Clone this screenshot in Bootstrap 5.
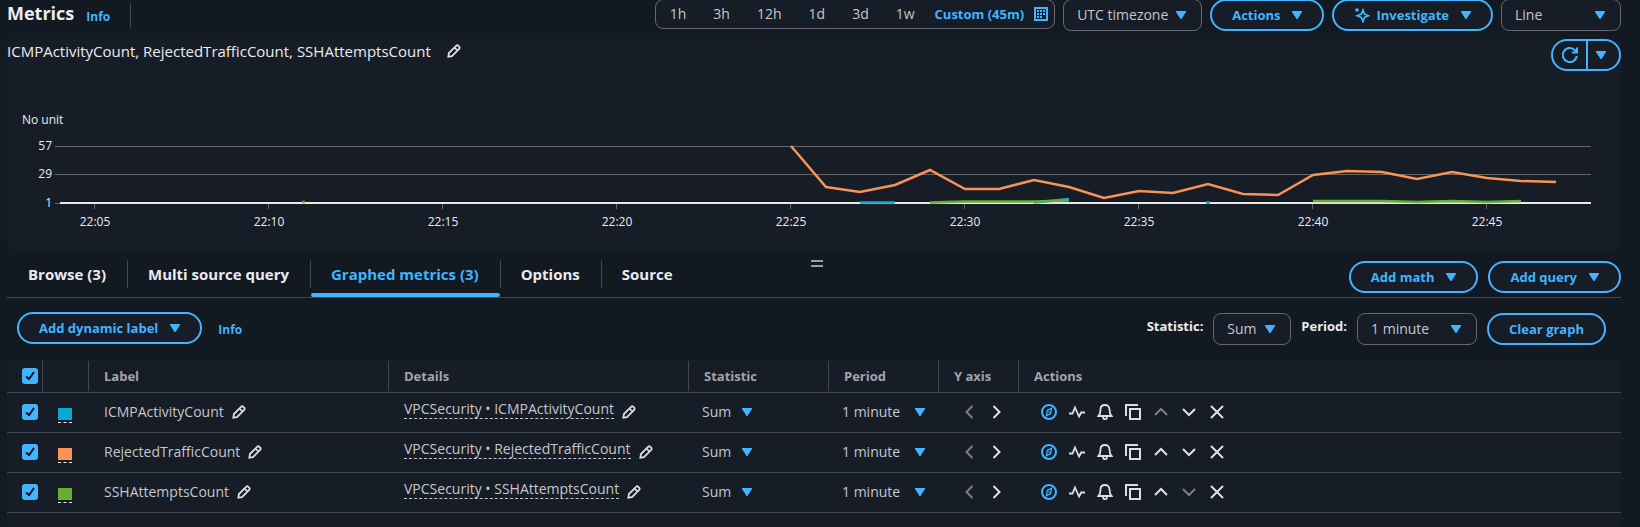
<!DOCTYPE html>
<html lang="en">
<head>
<meta charset="utf-8">
<meta name="viewport" content="width=device-width, initial-scale=1">
<title>Metrics</title>
<link href="https://cdn.jsdelivr.net/npm/bootstrap@5.3.0/dist/css/bootstrap.min.css" rel="stylesheet">
<style>
:root { --page: #131920; --panel: #161d26; --accent: #42b4ff; --line: #424650; --field: #656871; --text: #c6c6cd; --bright: #ebebf0; --muted: #a4a4ad; }
body { background: var(--page); color: var(--text); font: 14px/20px "Open Sans", sans-serif; padding: 0 19px 0 7px; overflow-x: hidden; }
svg { display: block; fill: none; stroke: currentColor; stroke-width: 2; }
.ico { width: 16px; height: 16px; flex: none; }
.ico-sm { width: 14px; height: 14px; flex: none; }
.caret { width: 10px; height: 8px; flex: none; fill: currentColor; stroke: none; }
a { color: var(--accent); text-decoration: none; }
.info { font-size: 12px; font-weight: 700; }
.bright { color: var(--bright); }
.gap-10 { gap: 10px; }
.gap-12 { gap: 12px; }

.topbar { height: 45px; margin-top: -1px; }
.topbar h1 { font-size: 18px; line-height: 28px; font-weight: 700; }
.rule { width: 1px; height: 25px; margin-left: 12px; background: var(--line); }
.pill { height: 32px; border: 2px solid var(--accent); border-radius: 16px; background: var(--panel); color: var(--accent); font-size: 13px; font-weight: 700; line-height: 20px; padding: 0 20px; display: inline-flex; align-items: center; gap: 12px; white-space: nowrap; }
.pill:hover { background: #1d2836; color: var(--accent); border-color: var(--accent); }
.pill-icon { gap: 6px; }
.ranges { height: 30px; border: 1px solid var(--field); border-radius: 8px; background: var(--panel); }
.ranges button { border: 0; background: none; color: var(--text); padding: 0 13px 0 14px; white-space: nowrap; }
.ranges .current { color: var(--accent); font-size: 13px; font-weight: 700; padding: 0 6px 0 7px; display: flex; align-items: center; gap: 10px; }
.field { height: 32px; border: 1px solid var(--field); border-radius: 8px; color: var(--text); font-size: 14px; line-height: 20px; padding: 0 26px 0 13px; background: var(--panel) url("data:image/svg+xml,%3Csvg xmlns='http://www.w3.org/2000/svg' viewBox='0 0 10 8'%3E%3Cpath d='M0 0h10v1L5.500 8h-1L0 1z' fill='%2342b4ff'/%3E%3C/svg%3E") no-repeat right 15px center / 10px 8px; }
.w-zone { width: 139px; }
.w-kind { width: 120px; }
.w-stat { width: 78px; }
.w-time { width: 120px; }
.plain { border: 0; border-radius: 0; height: 24px; padding-left: 0; margin-left: -2px; background-position: right 0 center; }
.plain.w-stat { width: 50px; padding-right: 12px; }
.plain.w-time { width: 83px; padding-right: 12px; }

.graph { background: var(--panel); border-radius: 0 0 16px 16px; }
.graph-head { height: 32px; margin-top: -5px; }
.graph-head h2 { font-size: 15px; line-height: 24px; font-weight: 400; }
.split { height: 32px; border: 2px solid var(--accent); border-radius: 16px; overflow: hidden; background: var(--panel); }
.split button { width: 33px; border: 0; padding: 0; background: none; color: var(--accent); display: flex; align-items: center; justify-content: center; }
.split button + button { border-left: 2px solid var(--accent); padding-right: 5px; }
.plot { width: 100%; height: auto; }
.plot text { fill: var(--bright); stroke: none; font-size: 12px; font-weight: 500; }

.tabs { height: 45px; border-bottom: 1px solid var(--line); position: relative; }
.tabs .nav-link { position: relative; height: 44px; padding: 0 21px; color: var(--bright); font-size: 15px; font-weight: 700; line-height: 42px; white-space: nowrap; }
.tabs .nav-link.active { color: var(--accent); }
.tabs li + li .nav-link::before { content: ""; position: absolute; left: 0; top: 7px; height: 28px; width: 1px; background: var(--line); }
.tabs .active::after { content: ""; position: absolute; left: 1px; right: 0; bottom: 0; height: 4px; border-radius: 2px; background: var(--accent); }
.grip { position: absolute; left: 50%; top: 7px; width: 12px; height: 7px; margin-left: -3px; border: solid #95a5a6; border-width: 2px 0; padding: 0; background: none; }

.tools { padding: 14px 15px 15px 10px; height: 62px; }
.tools label { color: var(--bright); font-size: 13px; font-weight: 700; line-height: 26px; }
.tools-right { margin-top: 1px; }

.metrics { background: var(--panel); table-layout: fixed; margin: 0; width: 100%; min-width: 1240px; }
.metrics th, .metrics td { padding: 0 16px; vertical-align: middle; border-bottom: 1px solid var(--line); white-space: nowrap; }
.metrics th { height: 32px; color: var(--muted); font-size: 13px; font-weight: 700; position: relative; }
.metrics th + th::before { content: ""; position: absolute; left: 0; top: 1px; bottom: 1px; width: 1px; background: var(--line); }
.metrics td { height: 40px; }
.metrics .pick { padding: 0 0 0 15px; }
.metrics .form-check-input { display: block; width: 16px; height: 16px; margin: 0; border: 0; border-radius: 3px; background-color: var(--accent); background-size: 16px 16px; background-image: url("data:image/svg+xml,%3Csvg xmlns='http://www.w3.org/2000/svg' viewBox='0 0 16 16'%3E%3Cpath d='M4 8.500l3 2.500 5-7' fill='none' stroke='%230f141a' stroke-width='2'/%3E%3C/svg%3E"); }
.swatch { display: block; width: 14px; height: 15px; margin-top: 6px; padding: 0 0 2px; border: 0; border-bottom: 1px dashed var(--bright); background-clip: content-box; }
.s-blue { background-color: #08aad2; } .s-orange { background-color: #f89256; } .s-green { background-color: #69ae34; }
.metric-link { color: var(--text); border-bottom: 1px dashed var(--text); line-height: 18px; margin-bottom: 5px; }
.act { border: 0; padding: 0; background: none; color: #dedee3; display: block; }
.act:disabled { color: #7d7f88; }
.act.on { color: var(--accent); }
.actions, .sides { padding-left: 7px; }
.tail { background: var(--panel); height: 16px; }
</style>
</head>
<body>
<svg class="d-none" aria-hidden="true">
  <symbol id="pen" viewBox="0 0 16 16"><path d="M1.500 14.500l.7-4.200 8.200-8.200c.8-.8 1.800-.8 2.600 0l.9.9c.8.8.8 1.800 0 2.600l-8.200 8.200zM8.500 4l3.500 3.500"/></symbol>
  <symbol id="caret" viewBox="0 0 10 8"><path d="M0 0h10v1L5.500 8h-1L0 1z"/></symbol>
  <symbol id="calendar" viewBox="0 0 14 14"><path d="M1 1h12v12H1z"/><path d="M3 4h2M6 4h2M9 4h2M3 7h2M6 7h2M9 7h2M3 10h2M6 10h2"/></symbol>
  <symbol id="spark" viewBox="0 0 16 16"><path stroke-width="1.700" d="M9 3l1.500 4L14.500 8.800l-4 1.700L9 14.500l-1.700-4L3.200 8.800l4.100-1.700z"/><path stroke-width="1.500" d="M3 1v4M1 3h4"/></symbol>
  <symbol id="refresh" viewBox="0 0 16 16"><path d="M14.800 9A7 7 0 1 1 13 3.300l1.500 1.500M15 .5V5.500h-5"/></symbol>
  <symbol id="compass" viewBox="0 0 16 16"><circle cx="8" cy="8" r="7"/><path stroke-width="1.300" d="M10.500 4.200l-.8 5.300-4.200 2.300.8-5.300zM8 7.200v1.600"/></symbol>
  <symbol id="pulse" viewBox="0 0 16 16"><path stroke-width="1.800" d="M0 9.500h3.500L6 3.500l4 9 2.200-4H16"/></symbol>
  <symbol id="bell" viewBox="0 0 16 16"><path stroke-width="1.800" d="M1.500 12h13c-1.500-1.500-2-3-2-6.500C12.500 2.500 10.500 1 8 1S3.500 2.500 3.500 5.500c0 3.500-.5 5-2 6.500zM6 13c0 3 4 3 4 0"/></symbol>
  <symbol id="copy" viewBox="0 0 16 16"><path d="M5 5h10v10H5zM1 12V1h12"/></symbol>
  <symbol id="left" viewBox="0 0 16 16"><path d="M11.500 2L5.500 8l6 6"/></symbol>
  <symbol id="right" viewBox="0 0 16 16"><path d="M4.500 2l6 6-6 6"/></symbol>
  <symbol id="up" viewBox="0 0 16 16"><path d="M2 11l6-6 6 6"/></symbol>
  <symbol id="down" viewBox="0 0 16 16"><path d="M2 5l6 6 6-6"/></symbol>
  <symbol id="close" viewBox="0 0 16 16"><path d="M2 2l12 12M14 2L2 14"/></symbol>
</svg>

<header class="topbar d-flex align-items-start gap-2">
  <h1 class="bright m-0">Metrics</h1>
  <a class="info ms-1 mt-2" href="#">Info</a>
  <span class="rule mt-1"></span>
  <div class="ranges d-flex ms-auto" role="group" aria-label="Time range">
    <button type="button">1h</button><button type="button">3h</button><button type="button">12h</button><button type="button">1d</button><button type="button">3d</button><button type="button">1w</button>
    <button type="button" class="current">Custom (45m)<svg class="ico-sm"><use href="#calendar"/></svg></button>
  </div>
  <select class="form-select field w-zone" aria-label="Time zone"><option>UTC timezone</option></select>
  <button type="button" class="btn pill">Actions<svg class="caret"><use href="#caret"/></svg></button>
  <button type="button" class="btn pill"><span class="pill-icon d-flex align-items-center"><svg class="ico"><use href="#spark"/></svg>Investigate</span><svg class="caret"><use href="#caret"/></svg></button>
  <select class="form-select field w-kind" aria-label="Graph type"><option>Line</option></select>
</header>

<main>
  <section class="graph">
    <div class="graph-head d-flex align-items-start">
      <div class="d-flex align-items-center gap-3">
        <h2 class="bright m-0">ICMPActivityCount, RejectedTrafficCount, SSHAttemptsCount</h2>
        <button type="button" class="act" aria-label="Edit title"><svg class="ico-sm"><use href="#pen"/></svg></button>
      </div>
      <div class="split d-flex ms-auto">
        <button type="button" aria-label="Refresh"><svg class="ico"><use href="#refresh"/></svg></button>
        <button type="button" aria-label="Refresh options"><svg class="caret"><use href="#caret"/></svg></button>
      </div>
    </div>
    <svg class="plot" viewBox="7 71 1614 182" role="img" aria-label="Metric counts by minute">
      <text x="22" y="124">No unit</text>
      <path stroke="#656666" stroke-width="1" d="M55 146.500H1591M55 174.500H1591M55 203.500H60M94.500 204v5M268.500 204v5M442.500 204v5M616.500 204v5M790.500 204v5M964.500 204v5M1138.500 204v5M1312.500 204v5M1486.500 204v5"/>
      <g text-anchor="end"><text x="52" y="150">57</text><text x="52" y="178">29</text><text x="52" y="207">1</text></g>
      <path stroke="#e8e8e4" d="M60 203H1591"/>
      <g stroke="#08aad2" stroke-width="2.500"><path d="M860 202.500H895M1034 202.500L1069 199M1206 202.500h4"/></g>
      <g stroke="#69ae34" stroke-width="2.500"><path d="M302 202h3M930 202.500L965 201.500H1034L1069 200.500M1313 201H1382L1417 202 1452 201 1487 202 1521 201"/></g>
      <path stroke="#f89256" stroke-width="2.500" d="M791 146L826 187 860 192 895 185 930 170 965 189 999 189 1034 180 1069 187 1104 198 1139 191 1173 193 1208 184 1243 194 1278 195 1313 175 1347 171 1382 172 1417 179 1452 172 1487 178 1521 181 1556 182"/>
      <g text-anchor="middle"><text x="95" y="226">22:05</text><text x="269" y="226">22:10</text><text x="443" y="226">22:15</text><text x="617" y="226">22:20</text><text x="791" y="226">22:25</text><text x="965" y="226">22:30</text><text x="1139" y="226">22:35</text><text x="1313" y="226">22:40</text><text x="1487" y="226">22:45</text></g>
    </svg>
  </section>

  <nav class="tabs d-flex justify-content-between">
    <ul class="nav flex-nowrap">
      <li><a class="nav-link" href="#">Browse (3)</a></li>
      <li><a class="nav-link" href="#">Multi source query</a></li>
      <li><a class="nav-link active" href="#">Graphed metrics (3)</a></li>
      <li><a class="nav-link" href="#">Options</a></li>
      <li><a class="nav-link" href="#">Source</a></li>
    </ul>
    <button type="button" class="grip" aria-label="Resize panels"></button>
    <div class="d-flex gap-10 mt-2">
      <button type="button" class="btn pill">Add math<svg class="caret"><use href="#caret"/></svg></button>
      <button type="button" class="btn pill">Add query<svg class="caret"><use href="#caret"/></svg></button>
    </div>
  </nav>

  <div class="tools d-flex align-items-start">
    <button type="button" class="btn pill">Add dynamic label<svg class="caret"><use href="#caret"/></svg></button>
    <a class="info ms-3 mt-2" href="#">Info</a>
    <div class="tools-right d-flex align-items-start gap-10 ms-auto">
      <label for="stat">Statistic:</label>
      <select id="stat" class="form-select field w-stat"><option>Sum</option></select>
      <label for="period">Period:</label>
      <select id="period" class="form-select field w-time"><option>1 minute</option></select>
      <button type="button" class="btn pill">Clear graph</button>
    </div>
  </div>

  <table class="metrics">
    <colgroup><col style="width:35px"><col style="width:46px"><col style="width:300px"><col style="width:300px"><col style="width:140px"><col style="width:110px"><col style="width:80px"><col></colgroup>
    <thead><tr>
      <th class="pick"><input class="form-check-input" type="checkbox" checked aria-label="Select all"></th><th></th><th>Label</th><th>Details</th><th>Statistic</th><th>Period</th><th>Y axis</th><th>Actions</th>
    </tr></thead>
    <tbody id="rows"></tbody>
  </table>
  <div class="tail"></div>
</main>

<script src="https://cdn.jsdelivr.net/npm/bootstrap@5.3.0/dist/js/bootstrap.bundle.min.js"></script>
<script>
const metrics = [["ICMPActivityCount", "blue"], ["RejectedTrafficCount", "orange"], ["SSHAttemptsCount", "green"]];
const act = (icon, label, state = "") => `<button type="button" class="act ${state === "on" ? "on" : ""}" aria-label="${label}" ${state === "disabled" ? "disabled" : ""}><svg class="${icon === "pen" ? "ico-sm" : "ico"}"><use href="#${icon}"/></svg></button>`;
document.getElementById("rows").innerHTML = metrics.map(([name, color], i) => `<tr>
  <td class="pick"><input class="form-check-input" type="checkbox" checked aria-label="Select ${name}"></td>
  <td><button type="button" class="swatch s-${color}" aria-label="Color"></button></td>
  <td><div class="d-flex align-items-center gap-2">${name}${act("pen", "Edit label")}</div></td>
  <td><div class="d-flex align-items-center gap-2"><a class="metric-link" href="#">VPCSecurity • ${name}</a>${act("pen", "Edit details")}</div></td>
  <td><select class="form-select field plain w-stat" aria-label="Statistic"><option>Sum</option></select></td>
  <td><select class="form-select field plain w-time" aria-label="Period"><option>1 minute</option></select></td>
  <td><div class="d-flex gap-12 sides">${act("left", "Left axis", "disabled")}${act("right", "Right axis")}</div></td>
  <td><div class="d-flex gap-12 actions">${act("compass", "Explore", "on")}${act("pulse", "Anomaly detection")}${act("bell", "Create alarm")}${act("copy", "Duplicate")}${act("up", "Move up", i === 0 ? "disabled" : "")}${act("down", "Move down", i === 2 ? "disabled" : "")}${act("close", "Remove")}</div></td>
</tr>`).join("");
</script>
</body>
</html>
